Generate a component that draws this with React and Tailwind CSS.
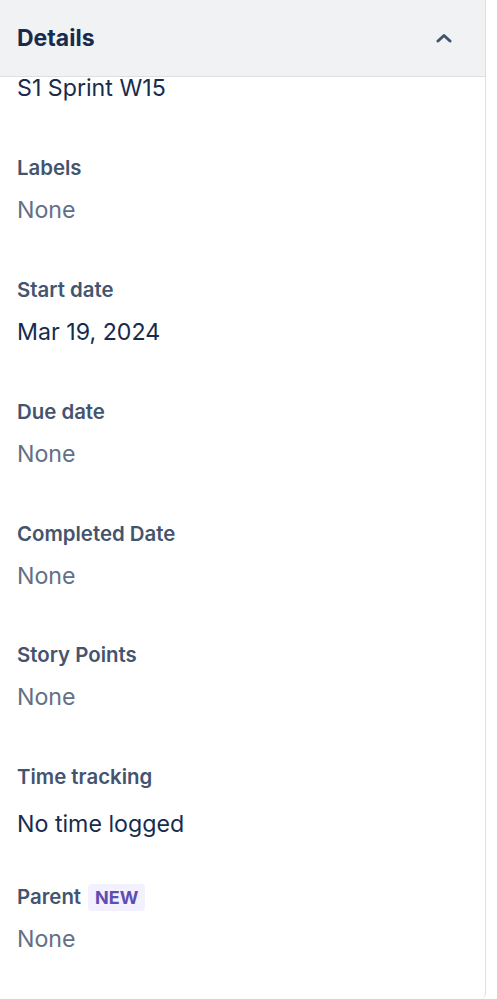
import { useState } from 'react';

const fields = [
  { label: 'Labels', value: 'None', muted: true, top: 'mt-[55px]' },
  { label: 'Start date', value: 'Mar 19, 2024', muted: false, top: 'mt-[52px]' },
  { label: 'Due date', value: 'None', muted: true, top: 'mt-[52px]' },
  { label: 'Completed Date', value: 'None', muted: true, top: 'mt-[52px]' },
  { label: 'Story Points', value: 'None', muted: true, top: 'mt-[51px]' },
  { label: 'Time tracking', value: 'No time logged', muted: false, top: 'mt-[52px]', gap: 'mt-[19px]' },
  { label: 'Parent', value: 'None', muted: true, top: 'mt-[45px]', badge: 'NEW' },
];

function Field({ field }) {
  return (
    <div className={field.top}>
      <div className="flex items-center h-[28px] text-[20.4px] leading-[28px] font-semibold text-[#44546f]">
        {field.label}
        {field.badge && (
          <span className="ml-[7px] h-[27px] px-[7px] rounded-[4px] bg-[#f3f0ff] text-[#5e4db2] text-[18px] leading-[27px] font-bold">
            {field.badge}
          </span>
        )}
      </div>
      <div
        className={`${field.gap || 'mt-[14px]'} h-[28px] text-[23.2px] leading-[28px] ${
          field.muted ? 'text-[#626f86]' : 'text-[#172b4d]'
        }`}
      >
        {field.value}
      </div>
    </div>
  );
}

export default function App() {
  const [open, setOpen] = useState(true);

  return (
    <div className="w-[497px] h-[999px] bg-white font-['Inter',sans-serif] overflow-hidden">
      <div className="w-[486px] h-full border-r border-[#dcdfe4] rounded-br-[6px] flex flex-col">
        <button
          className="h-[77px] shrink-0 flex items-center justify-between pl-[17px] pr-[33px] bg-[#f1f2f4] border-b border-[#dcdfe4]"
          onClick={() => setOpen(!open)}
        >
          <span className="text-[23px] font-bold text-[#172b4d]">Details</span>
          <svg width="16" height="10" viewBox="0 0 16 10" fill="none">
            <path d="M2 8l6-5.5L14 8" stroke="#44546f" strokeWidth="3" strokeLinecap="round" strokeLinejoin="round" />
          </svg>
        </button>
        <div className="px-[17px]">
          <div className="h-[22px] text-[23.2px] leading-[22px] text-[#172b4d]">S1 Sprint W15</div>
          {fields.map((f) => (
            <Field key={f.label} field={f} />
          ))}
        </div>
      </div>
    </div>
  );
}
